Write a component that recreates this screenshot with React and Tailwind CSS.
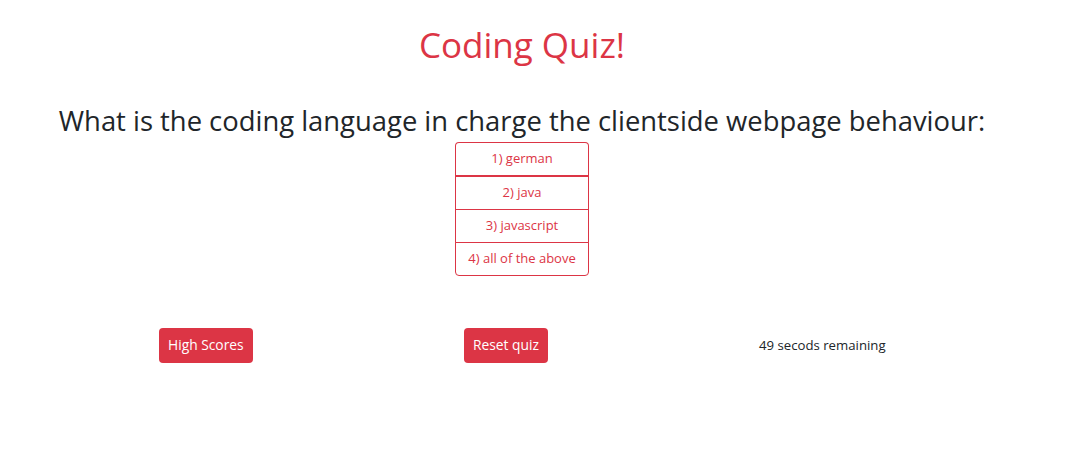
export default function App() {
  const answers = ["1) german", "2) java", "3) javascript", "4) all of the above"];

  return (
    <div className="w-[1044px] min-h-[453px] bg-white text-[#212529] font-['Open_Sans',sans-serif]">
      <h1 className="pt-[21px] text-center text-[35px] leading-[48px] text-[#dc3545]">Coding Quiz!</h1>

      <h3 className="mt-[35px] text-center text-[27.4px] leading-[34px]">
        What is the coding language in charge the clientside webpage behaviour:
      </h3>

      {/* answer list */}
      <div className="mx-auto mt-[4px] flex w-[134px] flex-col">
        {answers.map((a, i) => (
          <button
            key={a}
            className={`-mt-px first:mt-0 border border-[#dc3545] text-[13px] text-[#dc3545] bg-white ${
              i === 0 ? "h-[35px] rounded-t-[4px] border-b-2" : "h-[34px]"
            } ${i === answers.length - 1 ? "rounded-b-[4px]" : ""}`}
          >
            {a}
          </button>
        ))}
      </div>

      <div className="mt-[52px] flex items-center pl-[159px] text-[14px]">
        <div className="w-[305px]">
          <button className="h-[35px] rounded-[4px] bg-[#dc3545] px-[9px] text-[13.8px] text-white">High Scores</button>
        </div>
        <div className="w-[295px]">
          <button className="h-[35px] rounded-[4px] bg-[#dc3545] px-[9px] text-[13.8px] text-white">Reset quiz</button>
        </div>
        <p className="text-[13.2px]">49 secods remaining</p>
      </div>
    </div>
  );
}
